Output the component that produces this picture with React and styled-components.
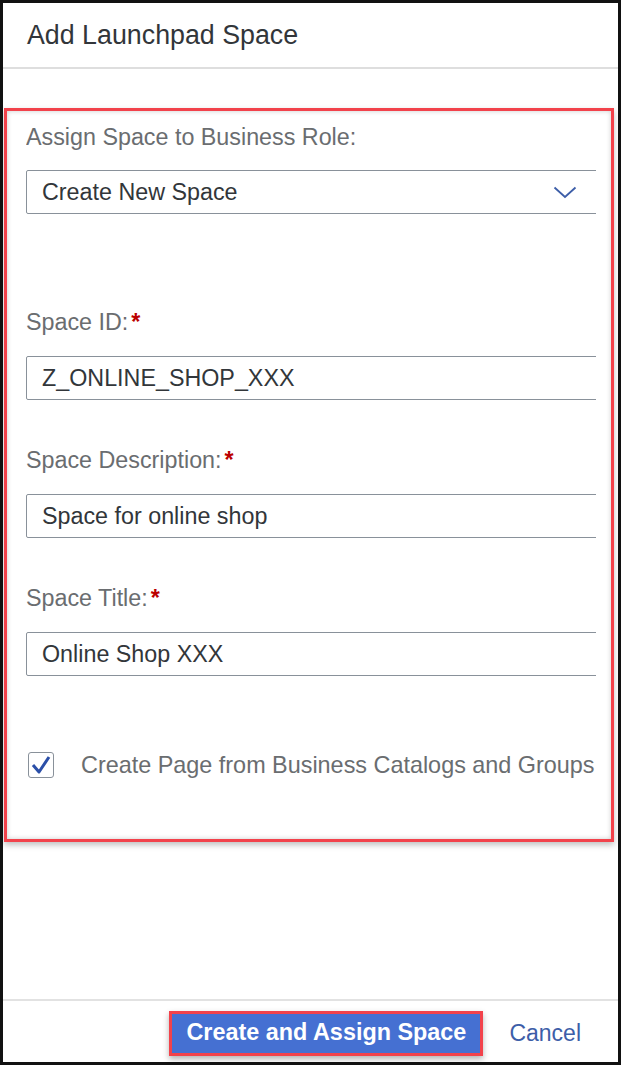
import styled, { createGlobalStyle } from "styled-components";

const GlobalStyle = createGlobalStyle`
  * { box-sizing: border-box; }
  body {
    margin: 0;
    background: #ffffff;
    font-family: "Liberation Sans", Arial, sans-serif;
  }
`;

const Frame = styled.div`
  width: 621px;
  height: 1065px;
  border: 3px solid #111111;
  display: flex;
  flex-direction: column;
  background: #ffffff;
`;

const Header = styled.header`
  height: 66px;
  flex-shrink: 0;
  display: flex;
  align-items: center;
  padding-left: 24px;
  border-bottom: 2px solid #dedede;
  font-size: 26.8px;
  color: #32363a;
`;

const Highlight = styled.section`
  margin: 39px 4px 0 1px;
  border: 3px solid #f2424b;
  box-shadow: 0 3px 6px rgba(0, 0, 0, 0.25), inset 0 0 5px rgba(0, 0, 0, 0.2);
  padding: 12px 0 60px 19px;
`;

const Clip = styled.div`
  width: 570px;
  overflow: hidden;
  display: flex;
  flex-direction: column;
`;

const Label = styled.div`
  font-size: 23.3px;
  line-height: 28px;
  color: #6a6d70;
  margin-top: ${(p) => p.$gap}px;
  white-space: nowrap;
`;

const Star = styled.span`
  color: #bb0000;
  margin-left: 3px;
  font-weight: bold;
`;

const Field = styled.div`
  margin-top: 20px;
  width: 600px;
  height: 44px;
  border: 1px solid #89919a;
  border-radius: 2px;
  display: flex;
  align-items: center;
  padding-left: 15px;
  font-size: 23.3px;
  color: #32363a;
  white-space: nowrap;
`;

const SelectField = styled(Field)`
  margin-top: 19px;
  justify-content: space-between;
  padding-right: 48px;
`;

const CheckRow = styled.div`
  margin-top: 75px;
  display: flex;
  align-items: center;
  gap: 27px;
  height: 28px;
  padding-left: 2px;
  white-space: nowrap;
  font-size: 23.4px;
  color: #6a6d70;
`;

const Box = styled.span`
  width: 26px;
  height: 26px;
  border: 1px solid #89919a;
  border-radius: 3px;
  display: flex;
  align-items: center;
  justify-content: center;
  flex-shrink: 0;
`;

const Spacer = styled.div`
  flex: 1;
`;

const Footer = styled.footer`
  height: 63px;
  flex-shrink: 0;
  border-top: 2px solid #e2e2e2;
  display: flex;
  align-items: center;
  justify-content: flex-end;
  gap: 26px;
  padding-right: 37px;
  padding-top: 3px;
`;

const PrimaryButton = styled.button`
  height: 45px;
  border: 3px solid #f2424b;
  background: #4570d2;
  color: #ffffff;
  font-family: "Liberation Sans", Arial, sans-serif;
  font-weight: bold;
  font-size: 23.4px;
  padding: 0 14px 2px;
  box-shadow: 0 3px 6px rgba(0, 0, 0, 0.3);
`;

const LinkButton = styled.button`
  background: none;
  border: none;
  padding: 0;
  color: #3d5ea8;
  font-family: "Liberation Sans", Arial, sans-serif;
  font-size: 23px;
`;

function Chevron() {
  return (
    <svg width="24" height="13" viewBox="0 0 24 13">
      <polyline
        points="1.5,1.5 12,11 22.5,1.5"
        fill="none"
        stroke="#3d5ea8"
        strokeWidth="1.8"
      />
    </svg>
  );
}

function Check() {
  return (
    <svg width="22" height="20" viewBox="0 0 22 20">
      <polyline
        points="3,10 9,17 19,2"
        fill="none"
        stroke="#2b4fa8"
        strokeWidth="3"
        strokeLinejoin="round"
      />
    </svg>
  );
}

export default function App() {
  return (
    <>
      <GlobalStyle />
      <Frame>
        <Header>Add Launchpad Space</Header>
        <Highlight>
          <Clip>
            <Label $gap={0}>Assign Space to Business Role:</Label>
            <SelectField>
              <span>Create New Space</span>
              <Chevron />
            </SelectField>
            <Label $gap={94}>
              Space ID:<Star>*</Star>
            </Label>
            <Field>Z_ONLINE_SHOP_XXX</Field>
            <Label $gap={46}>
              Space Description:<Star>*</Star>
            </Label>
            <Field>Space for online shop</Field>
            <Label $gap={46}>
              Space Title:<Star>*</Star>
            </Label>
            <Field>Online Shop XXX</Field>
            <CheckRow>
              <Box>
                <Check />
              </Box>
              <span>Create Page from Business Catalogs and Groups</span>
            </CheckRow>
          </Clip>
        </Highlight>
        <Spacer />
        <Footer>
          <PrimaryButton>Create and Assign Space</PrimaryButton>
          <LinkButton>Cancel</LinkButton>
        </Footer>
      </Frame>
    </>
  );
}
